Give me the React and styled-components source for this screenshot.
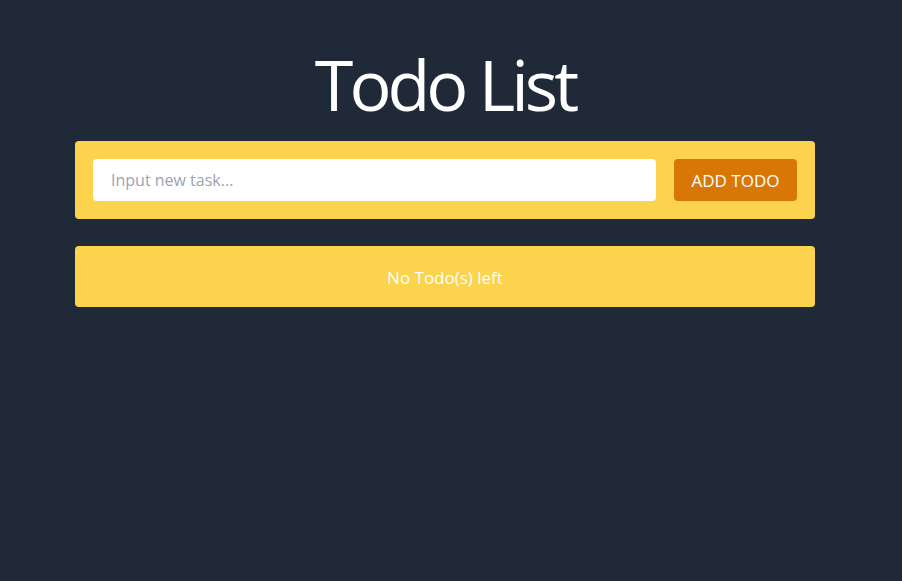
import React, { useState } from 'react';
import styled, { createGlobalStyle } from 'styled-components';

const GlobalStyle = createGlobalStyle`
  html, body {
    margin: 0;
    padding: 0;
    background: #1f2937;
    font-family: "Open Sans", "Noto Sans", sans-serif;
  }
  * {
    box-sizing: border-box;
  }
`;

const Page = styled.div`
  min-height: 100vh;
  background: #1f2937;
  padding: 46px 12px 0 0;
`;

const Container = styled.main`
  width: 740px;
  margin: 0 auto;
  display: flex;
  flex-direction: column;
`;

const Title = styled.h1`
  margin: 0 0 18px;
  text-align: center;
  color: #ffffff;
  font-size: 70px;
  font-weight: 400;
  line-height: 1.1;
  letter-spacing: -4px;
`;

const Panel = styled.div`
  background: #fcd34d;
  border-radius: 4px;
  display: flex;
  align-items: center;
  justify-content: ${({ center }) => (center ? 'center' : 'flex-start')};
  gap: 18px;
  min-height: ${({ center }) => (center ? '61px' : '78px')};
  padding: 18px;
  margin-bottom: 27px;
`;

const TaskInput = styled.input`
  flex: 1;
  height: 42px;
  border: none;
  border-radius: 4px;
  background: #ffffff;
  padding: 0 18px;
  font-family: inherit;
  font-size: 16px;
  color: #1f2937;
  outline: none;

  &::placeholder {
    color: #9ca3af;
  }
`;

const AddButton = styled.button`
  width: 123px;
  height: 42px;
  border: none;
  border-radius: 4px;
  background: #d97706;
  color: #ffffff;
  font-family: inherit;
  font-size: 17px;
  cursor: pointer;
`;

const EmptyText = styled.p`
  margin: 2px 0 0;
  color: #ffffff;
  font-size: 17px;
  line-height: 23px;
`;

const App = () => {
  const [value, setValue] = useState('');
  const [todos, setTodos] = useState([]);

  const addTodo = () => {
    if (!value.trim()) return;
    setTodos([...todos, value.trim()]);
    setValue('');
  };

  return (
    <>
      <GlobalStyle />
      <Page>
        <Container>
          <Title>Todo List</Title>
          <Panel>
            <TaskInput
              placeholder="Input new task..."
              value={value}
              onChange={e => setValue(e.target.value)}
            />
            <AddButton type="button" onClick={addTodo}>
              ADD TODO
            </AddButton>
          </Panel>
          <Panel center>
            {todos.length === 0 ? (
              <EmptyText>No Todo(s) left</EmptyText>
            ) : (
              <EmptyText>{todos.join(', ')}</EmptyText>
            )}
          </Panel>
        </Container>
      </Page>
    </>
  );
};

export default App;
